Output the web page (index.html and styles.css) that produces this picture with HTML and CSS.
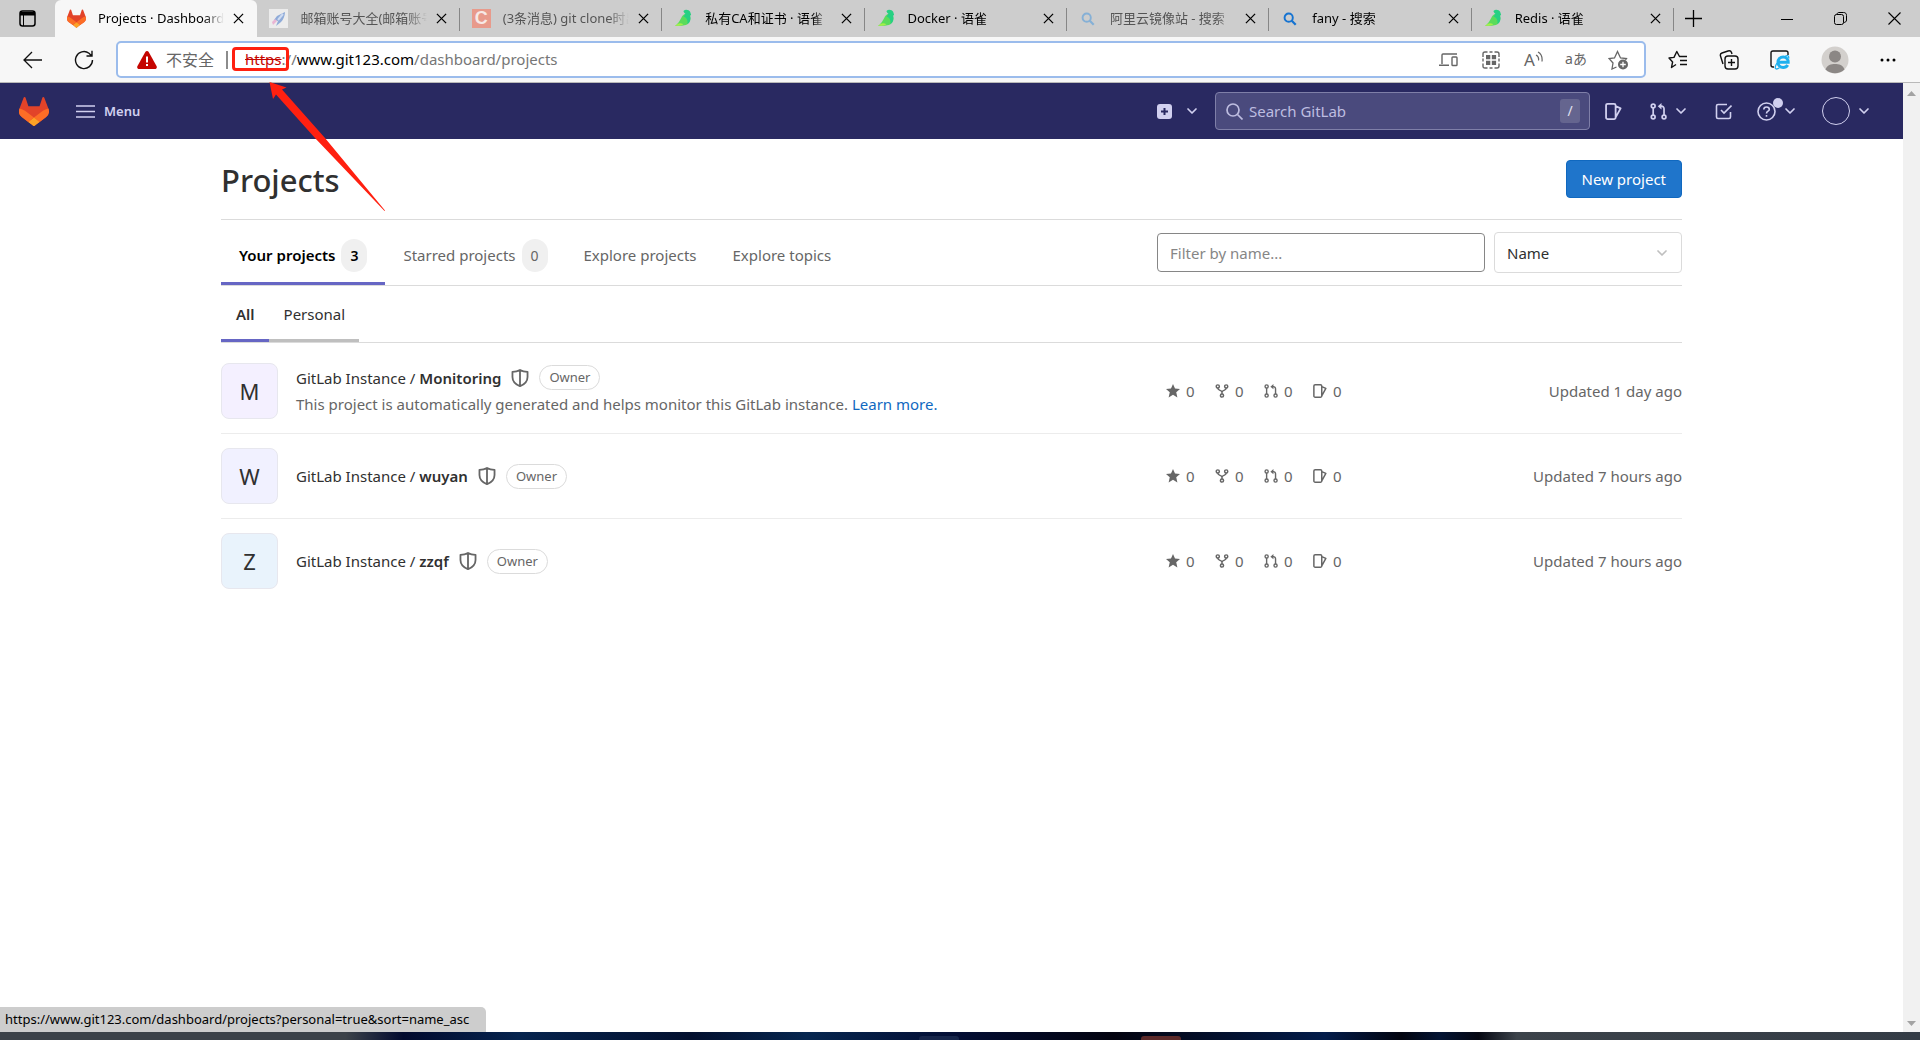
FILE: index.html
```html
<!DOCTYPE html>
<html lang="en">
<head>
<meta charset="utf-8">
<title>Projects · Dashboard · GitLab</title>
<link rel="stylesheet" href="styles.css">
</head>
<body>
<svg class="sprite" aria-hidden="true">
  <symbol id="tanuki" viewBox="0 0 25 24">
    <path fill="#e24329" d="m24.507 9.5-.034-.09L21.082.562a.896.896 0 0 0-1.694.091l-2.29 7.01H7.825L5.535.653a.898.898 0 0 0-1.694-.09L.451 9.411.416 9.5a6.297 6.297 0 0 0 2.09 7.278l.012.01.03.022 5.16 3.867 2.56 1.935 1.554 1.176a1.051 1.051 0 0 0 1.268 0l1.555-1.176 2.56-1.935 5.197-3.89.014-.01A6.297 6.297 0 0 0 24.507 9.5Z"/>
    <path fill="#fc6d26" d="m24.507 9.5-.034-.09a11.44 11.44 0 0 0-4.56 2.051l-7.447 5.632 4.742 3.584 5.197-3.89.014-.01A6.297 6.297 0 0 0 24.507 9.5Z"/>
    <path fill="#fca326" d="m7.707 20.677 2.56 1.935 1.555 1.176a1.051 1.051 0 0 0 1.268 0l1.555-1.176 2.56-1.935-4.743-3.584-4.755 3.584Z"/>
    <path fill="#fc6d26" d="M5.01 11.461a11.43 11.43 0 0 0-4.56-2.05L.416 9.5a6.297 6.297 0 0 0 2.09 7.278l.012.01.03.022 5.16 3.867 4.745-3.584-7.444-5.632Z"/>
  </symbol>
  <symbol id="yuque" viewBox="0 0 20 20">
    <path fill="#5bdb5b" d="M1 18C6 14 7 10 9 7c2-2 4-2 4-2l4 3c1 5-2 9-6 9-4 1-7 0-10 1Z"/>
    <path fill="#27d083" d="M10 2c2-2 6-1 7 1l1 3-1 1c1 4 0 7-3 9 1-4-1-7-4-8l2-3c-1-1-2-2-2-3Z"/>
    <path fill="#a5f04a" d="M1 18c3-3 5-4 9-2-3 2-5 1-9 2Z"/>
  </symbol>
  <symbol id="close" viewBox="0 0 12 12"><path fill="none" stroke="currentColor" stroke-width="1.4" d="m1 1 10 10M11 1 1 11"/></symbol>
  <symbol id="lens" viewBox="0 0 16 16"><circle cx="6.5" cy="6.5" r="4.7" fill="none" stroke="currentColor" stroke-width="2.2"/><path stroke="currentColor" stroke-width="2.6" d="m10 10 4.500 4.500"/></symbol>
  <symbol id="chevron" viewBox="0 0 16 16"><path fill="none" stroke="currentColor" stroke-width="1.700" stroke-linecap="round" stroke-linejoin="round" d="m4 6 4 4 4-4"/></symbol>
  <symbol id="issues" viewBox="0 0 16 16"><path fill="none" stroke="currentColor" stroke-width="1.700" stroke-linejoin="round" d="M2.500.9h6A1.500 1.500 0 0 1 10 2.400v11.200a1.500 1.500 0 0 1-1.500 1.500h-6A1.500 1.500 0 0 1 1 13.600V2.400A1.500 1.500 0 0 1 2.500.9ZM10 3l4.700 2L10 13.500"/></symbol>
  <symbol id="merge" viewBox="0 0 16 16"><g fill="none" stroke="currentColor" stroke-width="1.600"><circle cx="3" cy="2.800" r="1.800"/><circle cx="3" cy="13.200" r="1.800"/><circle cx="13.200" cy="13.200" r="1.800"/><path d="M3 4.600v6.800M13.200 11.400V5.500A2.500 2.500 0 0 0 10.700 3H9"/></g><path fill="currentColor" d="M10.800 0v6L7.300 3Z"/></symbol>
  <symbol id="fork" viewBox="0 0 16 16"><g fill="none" stroke="currentColor" stroke-width="1.700"><circle cx="3.200" cy="2.800" r="1.800"/><circle cx="12.800" cy="2.800" r="1.800"/><circle cx="8" cy="13.200" r="1.800"/><path d="M3.200 4.600C3.200 8 8 6.500 8 9.500v2M12.800 4.600C12.800 8 8 6.500 8 9.500"/></g></symbol>
  <symbol id="star" viewBox="0 0 16 16"><path fill="currentColor" d="m8 0 2.300 5.100 5.700.6-4.300 3.800 1.300 5.900L8 12.400l-5 3 1.300-5.900L0 5.700l5.700-.6Z"/></symbol>
  <symbol id="shield" viewBox="0 0 16 16"><path fill="none" stroke="currentColor" stroke-width="1.600" stroke-linejoin="round" d="M8 .8C6 2 4 2.500 1.300 2.500V7c0 4 2.500 6.500 6.700 8.300 4.200-1.800 6.700-4.300 6.700-8.300V2.500C12 2.500 10 2 8 .8ZM8 1v14"/></symbol>
</svg>

<header class="browser">
  <div class="tabstrip">
    <button class="tab-actions" aria-label="Tab actions"><svg width="17" height="17" viewBox="0 0 17 17"><rect x="1" y="1" width="15" height="15" rx="2.500" fill="none" stroke="#000" stroke-width="1.500"/><path d="M1 2h15v3.500H1Z"/><path stroke="#000" d="M4.500 5v11"/></svg></button>
    <div class="tabs">
      <div class="tab tab-on"><svg class="fav"><use href="#tanuki"/></svg><span class="tab-title">Projects · Dashboard · GitLab</span><button class="x" aria-label="Close tab"><svg width="11" height="11"><use href="#close"/></svg></button></div>
      <div class="tab dim"><svg class="fav" viewBox="0 0 19 19"><path fill="#ececec" d="M0 0h19v19H0Z"/><path fill="#8fabd8" d="M16 3 8 7l-3 4 4 1-2 5 5-4c2-2 4-6 4-10Z"/><path fill="#e9b5d4" d="m3 13 3-3 2 2-4 4Z"/><path stroke="#cfdcf2" stroke-width="2" d="m14 5-5 6"/></svg><span class="tab-title">邮箱账号大全(邮箱账号密码)</span><button class="x" aria-label="Close tab"><svg width="11" height="11"><use href="#close"/></svg></button></div>
      <div class="tab dim"><span class="fav fav-c">C</span><span class="tab-title">(3条消息) git clone时出现</span><button class="x" aria-label="Close tab"><svg width="11" height="11"><use href="#close"/></svg></button></div>
      <div class="tab"><svg class="fav"><use href="#yuque"/></svg><span class="tab-title">私有CA和证书 · 语雀</span><button class="x" aria-label="Close tab"><svg width="11" height="11"><use href="#close"/></svg></button></div>
      <div class="tab"><svg class="fav"><use href="#yuque"/></svg><span class="tab-title">Docker · 语雀</span><button class="x" aria-label="Close tab"><svg width="11" height="11"><use href="#close"/></svg></button></div>
      <div class="tab dim"><svg class="fav fav-lens pale"><use href="#lens"/></svg><span class="tab-title">阿里云镜像站 - 搜索</span><button class="x" aria-label="Close tab"><svg width="11" height="11"><use href="#close"/></svg></button></div>
      <div class="tab"><svg class="fav fav-lens"><use href="#lens"/></svg><span class="tab-title">fany - 搜索</span><button class="x" aria-label="Close tab"><svg width="11" height="11"><use href="#close"/></svg></button></div>
      <div class="tab"><svg class="fav"><use href="#yuque"/></svg><span class="tab-title">Redis · 语雀</span><button class="x" aria-label="Close tab"><svg width="11" height="11"><use href="#close"/></svg></button></div>
    </div>
    <button class="new-tab" aria-label="New tab"><svg width="17" height="17"><path stroke="#000" stroke-width="1.300" d="M8.500 0v17M0 8.500h17"/></svg></button>
    <div class="win">
      <button aria-label="Minimize"><svg width="12" height="12"><path stroke="#000" d="M0 6.500h12"/></svg></button>
      <button aria-label="Restore"><svg width="13" height="13" fill="none" stroke="#000"><rect x=".5" y="2.500" width="9" height="10" rx="2"/><path d="M3 2.500C3 1 4 .5 5 .5h4.500c2 0 3 1 3 3V8c0 1.500-1 2.500-3 2.500"/></svg></button>
      <button aria-label="Close"><svg width="13" height="13"><path stroke="#000" stroke-width="1.100" d="m.5.5 12 12M12.500.5l-12 12"/></svg></button>
    </div>
  </div>
  <div class="toolbar">
    <button class="tool" aria-label="Back"><svg width="20" height="18" fill="none" stroke="#111" stroke-width="1.300"><path d="M19 9H1M9 1 1 9l8 8"/></svg></button>
    <button class="tool reload" aria-label="Refresh"><svg width="20" height="20" fill="none" stroke="#111" stroke-width="1.400"><path d="M18.500 10A8.500 8.500 0 1 1 15 3.200l2.500 2.500M18 .8V6h-5.500"/></svg></button>
    <div class="address">
      <svg class="warn" width="20" height="18" viewBox="0 0 20 18"><path fill="#c50500" d="M10 0c.8 0 1.300.4 1.700 1l7.800 14c.8 1.500 0 3-1.700 3H2.200C.500 18-.300 16.500.500 15L8.300 1C8.700.4 9.200 0 10 0Z"/><path stroke="#fff" stroke-width="2" d="M10 5.500v6M10 13v2"/></svg>
      <span class="insecure">不安全</span>
      <div class="url" role="textbox" aria-label="Address" tabindex="0"><span class="scheme"><s>https</s>:</span>//<b>www.git123.com</b>/dashboard/projects</div>
      <div class="address-tools">
        <button aria-label="Send to devices"><svg width="20" height="14" fill="none" stroke="#666" stroke-width="1.400"><path d="M3 11V2c0-.6.400-1 1-1h14M0 12.200h10"/><rect x="13" y="4" width="5" height="8.500" rx=".8"/></svg></button>
        <button aria-label="Apps"><svg width="18" height="18" fill="none" stroke="#666" stroke-width="1.400"><path d="M1 6V3c0-1.500.500-2 2-2h2.500M7.500 1h3M12.500 1H15c1.500 0 2 .5 2 2v3M17 7.500v3M17 12.500V15c0 1.500-.5 2-2 2h-2.500M10.500 17h-3M5.500 17H3c-1.500 0-2-.5-2-2v-2.500M1 10.500v-3"/><path fill="#666" stroke="none" d="M4 4h4.300v4.300H4ZM9.800 4h4.300v4.300H9.800ZM4 9.800h4.300v4.300H4ZM9.800 9.800h4.300v4.300H9.800Z"/></svg></button>
        <button class="aloud" aria-label="Read aloud">A<svg width="8" height="12" fill="none" stroke="#666" stroke-width="1.200"><path d="M1 4c2 1 3 3 2.500 5.500M3 1c3 1.500 4.500 5 4 9.500"/></svg></button>
        <button class="translate" aria-label="Translate">aあ</button>
        <button aria-label="Add to favorites"><svg width="21" height="20" fill="none" stroke="#666" stroke-width="1.300"><path d="M8.500 17 4 19l1-6L1 8.500 6.500 8l3-6.500 3 6.500 6 .5-1 1.500"/><circle cx="15" cy="14.500" r="5" fill="#666" stroke="none"/><path stroke="#fff" d="M15 11.700v5.600M12.200 14.500h5.600"/></svg></button>
      </div>
    </div>
    <div class="browser-tools">
      <button aria-label="Favorites"><svg width="20" height="19" fill="none" stroke="#111" stroke-width="1.400" stroke-linejoin="round"><path d="m8 14.500-4.500 3L4.600 12 1 8l5-.6L8.800 1.500 11.500 6.500H19M12 10.500h7M12 14.500h7"/></svg></button>
      <button aria-label="Collections"><svg width="20" height="20" fill="none" stroke="#111" stroke-width="1.400"><rect x="6" y="6" width="13" height="13" rx="3"/><path d="M12.500 9v7M9 12.500h7M4 14 1.500 6c-.5-1.500.200-2.500 1.500-3l6-2c2-.5 3 0 3.500 1.500l.5 1.500"/></svg></button>
      <button class="ie" aria-label="Internet Explorer mode"><svg width="20" height="20" viewBox="0 0 20 20" fill="none"><path stroke="#111" stroke-width="1.400" d="M18 5V3c0-1.500-.5-2-2-2H3C1.500 1 1 1.500 1 3v12c0 1.500.500 2 2 2h1"/><path stroke="#1fb0ee" stroke-width="3" d="M7 12.200h11.200c0-3-2-5.200-5-5.200-3.200 0-5.200 2.300-5.200 5.200 0 3.200 2.200 5.300 5.200 5.300 2 0 3.500-.8 4.500-2.500"/><path stroke="#1fb0ee" stroke-width="1.300" d="M7 13c-2 3-2.500 6-.5 6 1 0 2-.5 3-1.200M15 6.500c2-1.500 4-1.500 3.800 2"/></svg></button>
      <button aria-label="Profile"><svg width="28" height="28"><circle cx="14" cy="14" r="13.500" fill="#d3d0cd"/><circle cx="14" cy="10.500" r="6" fill="#8b8785"/><path fill="#8b8785" d="M4.500 23.500C6 19 10 18 14 18s8 1 9.500 5.500C18 28.500 10 28.500 4.500 23.500Z"/></svg></button>
      <button aria-label="Settings and more"><svg width="16" height="4"><circle cx="2" cy="2" r="1.500"/><circle cx="8" cy="2" r="1.500"/><circle cx="14" cy="2" r="1.500"/></svg></button>
    </div>
  </div>
</header>

<div class="viewport">
  <div class="page">
    <nav class="navbar">
      <a class="brand" href="#" aria-label="GitLab"><svg width="30" height="29"><use href="#tanuki"/></svg></a>
      <button class="menu"><svg width="19" height="13"><path stroke="#d1d0ef" stroke-width="1.700" d="M0 1h19M0 6.500h19M0 12h19"/></svg>Menu</button>
      <div class="nav-right">
        <button class="create" aria-label="Create new"><svg width="15" height="15"><rect width="15" height="15" rx="3" fill="#d1d0ef"/><path stroke="#292961" stroke-width="2" d="M7.500 4v7M4 7.500h7"/></svg><svg class="chev"><use href="#chevron"/></svg></button>
        <label class="search"><svg width="17" height="17" fill="none" stroke="#bebde0" stroke-width="1.700"><circle cx="7" cy="7" r="6"/><path d="m11.500 11.500 5 5"/></svg><input type="search" placeholder="Search GitLab" aria-label="Search GitLab"><kbd>/</kbd></label>
        <a class="n-issues" href="#" aria-label="Issues"><svg width="17" height="17"><use href="#issues"/></svg></a>
        <button class="n-merge" aria-label="Merge requests"><svg width="17" height="17"><use href="#merge"/></svg><svg class="chev"><use href="#chevron"/></svg></button>
        <a class="n-todo" href="#" aria-label="To-Do List"><svg width="17" height="17" fill="none" stroke="currentColor" stroke-width="1.600"><path d="M12 1.500H3C2 1.500 1.500 2 1.500 3v11c0 1 .5 1.500 1.500 1.500h11c1 0 1.500-.5 1.500-1.500V9M6 7l3 3 7.500-7.500"/></svg></a>
        <button class="n-help" aria-label="Help"><svg width="19" height="19" fill="none" stroke="currentColor" stroke-width="1.600"><circle cx="9.500" cy="9.500" r="8.500"/><path d="M6.800 7.600C6.800 6 8 5 9.500 5s2.800 1 2.800 2.400C12.300 9.400 9.500 9 9.500 11.500M9.500 13v1.800"/></svg><i class="dot"></i><svg class="chev"><use href="#chevron"/></svg></button>
        <button class="n-user" aria-label="User menu"><i class="ring"></i><svg class="chev"><use href="#chevron"/></svg></button>
      </div>
    </nav>

    <main class="content">
      <div class="title-row">
        <h1>Projects</h1>
        <button class="primary">New project</button>
      </div>
      <div class="main-tabs">
        <a class="on" href="#">Your projects<span class="count">3</span></a>
        <a href="#">Starred projects<span class="count">0</span></a>
        <a href="#">Explore projects</a>
        <a href="#">Explore topics</a>
        <div class="filters">
          <input type="text" placeholder="Filter by name..." aria-label="Filter by name">
          <div class="sort"><select aria-label="Sort by"><option>Name</option></select><svg class="chev"><use href="#chevron"/></svg></div>
        </div>
      </div>
      <div class="sub-tabs">
        <a class="on" href="#">All</a>
        <a class="hover" href="#">Personal</a>
      </div>
      <ul class="projects">
        <li>
          <span class="avatar violet">M</span>
          <div class="info">
            <div class="name"><a href="#">GitLab Instance / <strong>Monitoring</strong></a><svg class="shield"><use href="#shield"/></svg><span class="role">Owner</span></div>
            <p>This project is automatically generated and helps monitor this GitLab instance. <a href="#">Learn more.</a></p>
          </div>
          <div class="stats"><a href="#"><svg><use href="#star"/></svg>0</a><a href="#"><svg><use href="#fork"/></svg>0</a><a href="#"><svg><use href="#merge"/></svg>0</a><a href="#"><svg><use href="#issues"/></svg>0</a></div>
          <span class="updated">Updated 1 day ago</span>
        </li>
        <li>
          <span class="avatar indigo">W</span>
          <div class="info">
            <div class="name"><a href="#">GitLab Instance / <strong>wuyan</strong></a><svg class="shield"><use href="#shield"/></svg><span class="role">Owner</span></div>
          </div>
          <div class="stats"><a href="#"><svg><use href="#star"/></svg>0</a><a href="#"><svg><use href="#fork"/></svg>0</a><a href="#"><svg><use href="#merge"/></svg>0</a><a href="#"><svg><use href="#issues"/></svg>0</a></div>
          <span class="updated">Updated 7 hours ago</span>
        </li>
        <li>
          <span class="avatar blue">Z</span>
          <div class="info">
            <div class="name"><a href="#">GitLab Instance / <strong>zzqf</strong></a><svg class="shield"><use href="#shield"/></svg><span class="role">Owner</span></div>
          </div>
          <div class="stats"><a href="#"><svg><use href="#star"/></svg>0</a><a href="#"><svg><use href="#fork"/></svg>0</a><a href="#"><svg><use href="#merge"/></svg>0</a><a href="#"><svg><use href="#issues"/></svg>0</a></div>
          <span class="updated">Updated 7 hours ago</span>
        </li>
      </ul>
    </main>
    <div class="status">https://www.git123.com/dashboard/projects?personal=true&amp;sort=name_asc</div>
  </div>
  <div class="scrollbar"><svg width="9" height="5"><path fill="#a3a3a3" d="M0 5 4.500 0 9 5Z"/></svg><svg width="9" height="5"><path fill="#a3a3a3" d="m0 0 4.500 5L9 0Z"/></svg></div>
</div>
<div class="taskbar"><i class="app"></i><i class="app red"></i></div>

<div class="mark-box"></div>
<svg class="mark-arrow" width="120" height="132" viewBox="268 81 120 132"><path fill="#ff2010" d="m269.500 82 17 5.500-4.500 2L325 138l60 72.500-.5.5L315 138 276 94.500l-3 4.500Z"/></svg>
</body>
</html>
```
FILE: styles.css
```css
* { box-sizing: border-box; }

body {
  margin: 0;
  min-height: 100vh;
  display: flex;
  flex-direction: column;
  position: relative;
  background: #fff;
  color: #303030;
  font: 15px/24px "Noto Sans", "Noto Sans CJK SC", sans-serif;
}

button, input, select { font: inherit; color: inherit; }
button { border: 0; padding: 0; background: none; display: flex; align-items: center; justify-content: center; white-space: nowrap; }
a { color: inherit; text-decoration: none; }
svg { display: block; flex: none; }
.sprite { position: absolute; width: 0; height: 0; }

/* Browser tabs */
.tabstrip { display: flex; height: 37px; background: #cdcdcd; }
.tab-actions { width: 55px; }
.tabs { flex: 0 1 1619px; min-width: 0; display: flex; }
.tab {
  flex: 1;
  min-width: 0;
  display: flex;
  align-items: center;
  padding: 0 13px 0 12px;
  font-size: 13px;
  color: #000;
  position: relative;
}
.tab:not(.tab-on)::after {
  content: "";
  position: absolute;
  right: 0;
  top: 8px;
  width: 1px;
  height: 23px;
  background: #868686;
}
.tab-on { background: #f7f7f7; border-radius: 6px 6px 0 0; }
.dim { color: #555; }
.fav { flex: none; width: 19px; height: 19px; margin-right: 12px; }
.fav-c { background: #e89a8b; color: #f7e9e6; font: bold 18px/19px "Liberation Sans", sans-serif; text-align: center; }
.fav-lens { width: 14px; height: 14px; margin: 0 15px 0 2px; color: #1573d1; }
.pale { color: #85b0d6; }
.tab-title {
  flex: 1;
  min-width: 0;
  overflow: hidden;
  white-space: nowrap;
  line-height: 22px;
  padding-bottom: 1px;
  -webkit-mask-image: linear-gradient(90deg, #000 calc(100% - 20px), transparent);
  mask-image: linear-gradient(90deg, #000 calc(100% - 20px), transparent);
}
.x { margin-left: 9px; color: #000; }
.new-tab { margin-left: 11px; }
.win { margin-left: auto; display: flex; gap: 41px; padding-right: 19px; }

/* Browser toolbar */
.toolbar {
  display: flex;
  align-items: center;
  height: 46px;
  padding: 0 24px 0 23px;
  background: #f7f7f7;
  border-bottom: 1px solid #b9b9b9;
}
.reload { margin-left: 31px; }
.address {
  flex: 1;
  display: flex;
  align-items: center;
  height: 37px;
  margin-left: 22px;
  padding: 0 15px 0 19px;
  background: #fff;
  border: 2px solid #9bbcec;
  border-radius: 5px;
}
.insecure { margin-left: 9px; padding-right: 12px; border-right: 2px solid #8c8c8c; color: #666; font-size: 16px; line-height: 18px; }
.url { flex: 1; margin-left: 17px; padding-bottom: 1px; color: #767676; white-space: nowrap; }
.url b { font-weight: 400; color: #000; }
.scheme s { color: #c50500; }
.address-tools { display: flex; align-items: center; justify-content: space-between; width: 191px; color: #666; }
.address-tools button { width: 21px; }
.aloud { font-size: 17px; line-height: 20px; }
.aloud svg { margin-bottom: 6px; }
.translate { font-size: 14px; line-height: 20px; padding-bottom: 2px; }
.browser-tools { display: flex; align-items: center; justify-content: space-between; width: 228px; margin-left: 22px; }

/* Page viewport */
.viewport { flex: 1; display: flex; }
.page { flex: 1; min-width: 0; position: relative; }
.scrollbar {
  width: 17px;
  padding: 8px 0 6px;
  display: flex;
  flex-direction: column;
  justify-content: space-between;
  align-items: center;
  background: #f1f1f1;
}

/* GitLab navigation */
.navbar { display: flex; align-items: center; height: 56px; padding: 0 31px 0 19px; background: #292961; color: #d1d0ef; }
.menu { margin-left: 27px; gap: 9px; font-size: 13px; font-weight: 600; }
.chev { width: 16px; height: 16px; }
.nav-right { margin-left: auto; display: flex; align-items: center; }
.create { gap: 12px; margin-right: 15px; }
.search {
  display: flex;
  align-items: center;
  gap: 6px;
  width: 375px;
  height: 38px;
  padding: 0 9px 0 10px;
  background: #4a4a7d;
  border: 1px solid #7f7fa8;
  border-radius: 4px;
}
.search input { flex: 1; min-width: 0; padding: 0; border: 0; outline: 0; background: none; }
.search input::placeholder { color: #bebde0; opacity: 1; }
kbd { width: 20px; border-radius: 3px; background: #65658f; color: #e0e0f0; font: 14px/24px "Noto Sans", sans-serif; text-align: center; }
.n-issues { margin-left: 15px; }
.n-merge { margin-left: 28px; gap: 6px; }
.n-todo { margin-left: 26px; }
.n-help { margin-left: 25px; gap: 6px; position: relative; }
.dot { position: absolute; left: 16px; top: -4px; width: 10px; height: 10px; border-radius: 50%; background: #d1d0ef; }
.n-user { margin-left: 24px; gap: 6px; }
.ring { width: 28px; height: 28px; border: 1px solid #d1d0ef; border-radius: 50%; }

/* Projects */
.content { max-width: 1461px; margin: 0 auto; }
.title-row { display: flex; align-items: center; justify-content: space-between; height: 81px; border-bottom: 1px solid #dbdbdb; }
h1 { margin: 0; padding-top: 2px; font-size: 31px; line-height: 40px; font-weight: 500; }
.primary {
  height: 38px;
  padding: 0 15px;
  border: 1px solid #1068bf;
  border-radius: 4px;
  background: #1f75cb;
  color: #fff;
}
.main-tabs { display: flex; height: 66px; border-bottom: 1px solid #dbdbdb; }
.main-tabs > a { display: flex; align-items: center; padding: 5px 18px 0; color: #666; white-space: nowrap; }
.main-tabs > .on { color: #000; font-weight: 600; border-bottom: 3px solid #6666c4; padding-top: 8px; }
.count { width: 26px; margin-left: 6px; border-radius: 13px; background: #f0f0f0; font-size: 14px; line-height: 33px; text-align: center; }
.filters { margin-left: auto; display: flex; align-items: center; gap: 9px; }
.filters input { width: 328px; height: 39px; padding: 0 12px; border: 1px solid #868686; border-radius: 4px; }
.filters input::placeholder { color: #868686; opacity: 1; }
.sort { display: grid; align-items: center; }
.sort > * { grid-area: 1 / 1; }
.sort select { appearance: none; width: 188px; height: 41px; padding: 0 12px; background: #fff; border: 1px solid #dbdbdb; border-radius: 4px; }
.sort .chev { justify-self: end; margin-right: 12px; color: #bfbfbf; pointer-events: none; }
.sub-tabs { display: flex; height: 57px; border-bottom: 1px solid #dbdbdb; }
.sub-tabs a { display: flex; align-items: center; padding: 3px 14px 0 15px; border-bottom: 3px solid; }
.sub-tabs .on { font-weight: 600; border-color: #6666c4; }
.sub-tabs .hover { border-color: #bfbfbf; }

.projects { margin: 0; padding: 5px 0 0; list-style: none; }
.projects li { display: flex; align-items: center; height: 85px; }
.projects li + li { border-top: 1px solid #ececec; }
.avatar { width: 57px; height: 56px; border: 1px solid #e7e7ee; border-radius: 8px; font-size: 22px; line-height: 54px; text-align: center; }
.violet { background: #f4f0ff; }
.indigo { background: #f1f1ff; }
.blue { background: #e9f3fc; }
.info { flex: 1; margin-left: 18px; }
.name { display: flex; align-items: center; line-height: 26px; }
.name strong { font-weight: 600; }
.shield { width: 18px; height: 18px; margin: 0 10px; color: #666; }
.role { padding: 0 9px; border: 1px solid #dbdbdb; border-radius: 13px; color: #666; font-size: 13px; line-height: 23px; }
.info p { margin: 0; color: #666; line-height: 26px; }
.info p a { color: #1068bf; }
.stats { display: grid; grid-template-columns: repeat(4, 49px); color: #666; }
.stats a { display: flex; align-items: center; gap: 6px; }
.stats svg { width: 14px; height: 14px; }
.updated { width: 320px; color: #666; text-align: right; }

.status {
  position: absolute;
  left: 0;
  bottom: 0;
  padding: 0 17px 0 5px;
  background: #cdcdcd;
  border-radius: 0 5px 0 0;
  color: #000;
  font-size: 13px;
  line-height: 25px;
}

/* Desktop taskbar edge */
.taskbar {
  display: flex;
  gap: 182px;
  justify-content: center;
  height: 8px;
  padding-left: 180px;
  background: linear-gradient(90deg, #3c4249 0 18%, #020a2e 21%, #06244e 27%, #03102f 36%, #06264f 42%, #030d33 50%, #03030f 58%, #031c4a 69%, #02040f 73%, #031433 75%, #050712 77%, #3c434a 79%, #343c46);
}
.app { width: 40px; height: 4px; margin-top: 4px; border-radius: 3px 3px 0 0; background: #16254a; }
.red { background: #5c2a2a; }

/* Annotation over the address bar */
.mark-box { position: absolute; left: 232px; top: 47px; width: 57px; height: 24px; border: 3px solid #ff2010; border-radius: 4px; }
.mark-arrow { position: absolute; left: 268px; top: 81px; }
```
